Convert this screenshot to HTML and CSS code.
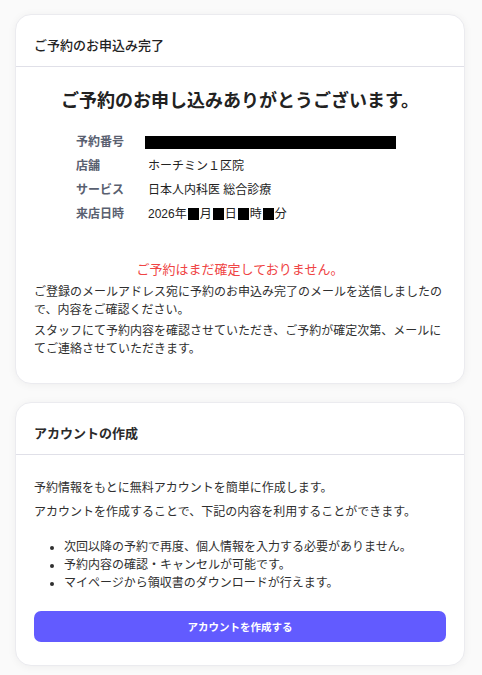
FILE: index.html
```html
<!DOCTYPE html>
<html lang="ja">
<head>
<meta charset="utf-8">
<title>ご予約のお申込み完了</title>
<link rel="stylesheet" href="styles.css">
</head>
<body>
<main class="page">
  <section class="card">
    <header class="card-head">
      <h2 class="card-title">ご予約のお申込み完了</h2>
    </header>
    <div class="card-body card-body--first">
      <h1 class="thanks">ご予約のお申し込みありがとうございます。</h1>
      <dl class="details">
        <dt>予約番号</dt>
        <dd><span class="redact-bar"></span></dd>
        <dt>店舗</dt>
        <dd>ホーチミン１区院</dd>
        <dt>サービス</dt>
        <dd>日本人内科医 総合診療</dd>
        <dt>来店日時</dt>
        <dd>2026年<span class="redact"></span>月<span class="redact"></span>日<span class="redact"></span>時<span class="redact"></span>分</dd>
      </dl>
      <p class="warning">ご予約はまだ確定しておりません。</p>
      <p class="note">ご登録のメールアドレス宛に予約のお申込み完了のメールを送信しましたので、内容をご確認ください。</p>
      <p class="note">スタッフにて予約内容を確認させていただき、ご予約が確定次第、メールにてご連絡させていただきます。</p>
    </div>
  </section>

  <section class="card">
    <header class="card-head">
      <h2 class="card-title card-title--strong">アカウントの作成</h2>
    </header>
    <div class="card-body card-body--second">
      <p class="intro">予約情報をもとに無料アカウントを簡単に作成します。</p>
      <p class="intro">アカウントを作成することで、下記の内容を利用することができます。</p>
      <ul class="benefits">
        <li>次回以降の予約で再度、個人情報を入力する必要がありません。</li>
        <li>予約内容の確認・キャンセルが可能です。</li>
        <li>マイページから領収書のダウンロードが行えます。</li>
      </ul>
      <button class="btn-primary" type="button">アカウントを作成する</button>
    </div>
  </section>
</main>
</body>
</html>
```

FILE: styles.css
```css
* {
  box-sizing: border-box;
}

html,
body {
  margin: 0;
  padding: 0;
  background: #fafafa;
}

body {
  font-family: "Liberation Sans", "Noto Sans CJK JP", sans-serif;
  color: #2b2b2b;
  font-size: 12px;
}

.page {
  display: flex;
  flex-direction: column;
  gap: 18px;
  padding: 14px 17px 20px 15px;
}

.card {
  background: #ffffff;
  border: 1px solid #ebebef;
  border-radius: 16px;
  box-shadow: 0 1px 8px rgba(0, 0, 0, 0.05);
}

.card-head {
  padding: 21px 18px 10px;
  border-bottom: 1px solid #e0e0e8;
}

.card-title {
  margin: 0;
  font-size: 13px;
  line-height: 20px;
  font-weight: 500;
  color: #222;
}

.card-title--strong {
  font-weight: 700;
  color: #2a2a2a;
}

.card-body {
  padding: 0 18px;
}

.card-body--first {
  padding-top: 21px;
  padding-bottom: 25px;
}

.card-body--second {
  padding-top: 24px;
  padding-bottom: 23px;
}

.thanks {
  margin: 0;
  text-align: center;
  font-size: 18px;
  line-height: 27px;
  font-weight: 700;
  color: #222;
}

.details {
  display: grid;
  grid-template-columns: 72px auto;
  row-gap: 6px;
  margin: 18px 0 0 42px;
  line-height: 18px;
}

.details dt {
  font-weight: 700;
  color: #596070;
}

.details dd {
  margin: 0;
  color: #222;
  display: flex;
  align-items: center;
}

.redact-bar {
  display: block;
  width: 251px;
  height: 13px;
  margin-left: -3px;
  background: #000;
}

.redact {
  display: inline-block;
  width: 11px;
  height: 12px;
  margin: 0 1px;
  background: #000;
}

.warning {
  margin: 37px 0 3px;
  text-align: center;
  color: #ef4444;
  font-size: 13px;
  line-height: 20px;
}

.note {
  margin: 0 0 3px;
  line-height: 18px;
  color: #2f2f2f;
}

.note:last-child {
  margin-bottom: 0;
}

.intro {
  margin: 0 0 6px;
  line-height: 18px;
  color: #2f2f2f;
}

.benefits {
  margin: 17px 0 0;
  padding-left: 30px;
  line-height: 18px;
  color: #2f2f2f;
}

.btn-primary {
  display: block;
  width: 100%;
  height: 31px;
  margin-top: 19px;
  border: 0;
  border-radius: 7px;
  background: #625bff;
  color: #fff;
  font-family: "Liberation Sans", "Noto Sans CJK JP", sans-serif;
  font-size: 10.5px;
  font-weight: 700;
  cursor: pointer;
}
```
